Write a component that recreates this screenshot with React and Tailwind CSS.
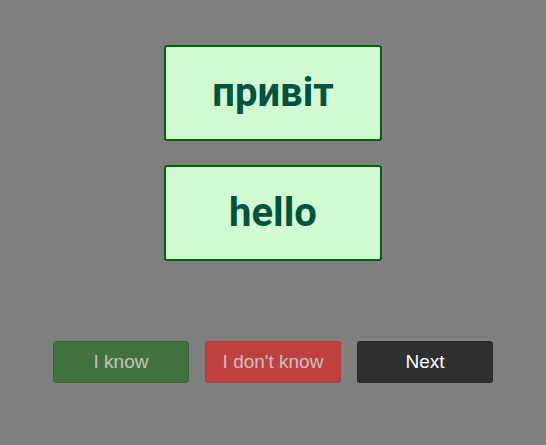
export default function App() {
  return (
    <div className="min-h-[445px] w-full bg-[#808080] flex flex-col items-center pt-[45px]">
      <div className="w-[218px] h-[96px] bg-[#d1fad3] border-2 border-[#006400] rounded-[3px] flex items-center justify-center">
        <span className="text-[40px] font-bold text-[#00533d] [font-family:Roboto,sans-serif] leading-none">
          привіт
        </span>
      </div>
      <div className="mt-[24px] w-[218px] h-[96px] bg-[#d1fad3] border-2 border-[#006400] rounded-[3px] flex items-center justify-center">
        <span className="text-[40px] font-bold text-[#00533d] [font-family:Roboto,sans-serif] leading-none">
          hello
        </span>
      </div>
      <div className="mt-[80px] flex gap-4 [font-family:'Liberation_Sans',Arial,sans-serif]">
        <button className="w-[136px] h-[42px] rounded-[3px] bg-[#41733f] border border-[#3a6838] text-[#c3c3c3] text-[19px]">
          I know
        </button>
        <button className="w-[136px] h-[42px] rounded-[3px] bg-[#c04040] border border-[#b03a3a] text-[#c8c0c0] text-[19px]">
          I don't know
        </button>
        <button className="w-[136px] h-[42px] rounded-[3px] bg-[#303030] border border-[#262626] text-white text-[19px]">
          Next
        </button>
      </div>
    </div>
  );
}
